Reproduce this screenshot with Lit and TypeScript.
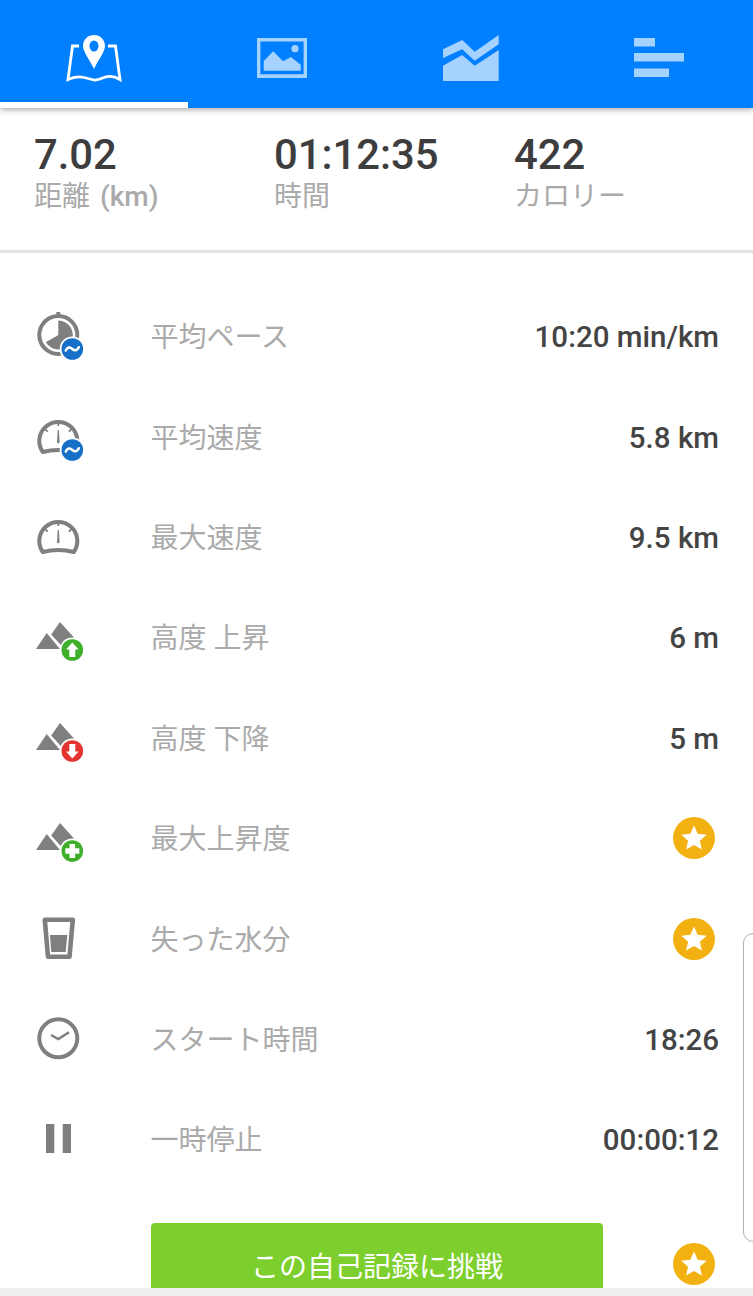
import { LitElement, html, css, svg } from "lit";
import { customElement } from "lit/decorators.js";

const GRAY = "#7f7f7f";

const badge = (color: string, inner: unknown) => svg`
  <circle cx="42.3" cy="42" r="12.6" fill="#fff"/>
  <circle cx="42.3" cy="42" r="10.8" fill="${color}"/>
  ${inner}`;

const wave = svg`<path d="M35.8 43.5c1.6-3.4 4-3.8 6.5-1.6s4.9 1.8 6.5-1.6" fill="none" stroke="#fff" stroke-width="2.6" stroke-linecap="round"/>`;
const arrowUp = svg`<path d="M42.3 34.6 48.6 41.6H45.3V49H39.3V41.6H36Z" fill="#fff"/>`;
const arrowDown = svg`<path d="M42.3 49.4 48.6 42.4H45.3V35H39.3V42.4H36Z" fill="#fff"/>`;
const plus = svg`<path d="M39.5 35h5.6v4.2h4.2v5.6h-4.2V49h-5.6v-4.2h-4.2v-5.6h4.2Z" fill="#fff"/>`;

const gauge = svg`
  <path d="M12.8 44A19 19 0 1 1 43.8 44Q28.3 40.2 12.8 44Z" fill="none" stroke="${GRAY}" stroke-width="4" stroke-linejoin="round"/>
  <path d="M28.3 15v3M15.500 21.500l2.200 2.200M41.100 21.500l-2.200 2.200" stroke="${GRAY}" stroke-width="1.800"/>
  <path d="M27.700 22h1.200l.7 12a1.300 1.300 0 0 1-2.600 0Z" fill="${GRAY}"/>`;

const mountains = svg`
  <path d="M6 41 16.700 25 30 41Z" fill="${GRAY}"/>
  <path d="M21.200 26.500 30 14 44 29.500 33.500 40Z" fill="${GRAY}"/>`;

const stopwatch = svg`
  <circle cx="28.3" cy="28" r="19" fill="none" stroke="${GRAY}" stroke-width="4"/>
  <rect x="26.300" y="5" width="4" height="5" fill="${GRAY}"/>
  <path d="M12 15l2.600-3 2.400 2-2.600 3Z" fill="${GRAY}"/>
  <path d="M28.300 28V13.500A14.500 14.500 0 1 1 15.800 35.300Z" fill="${GRAY}"/>`;

const glass = svg`
  <path d="M14.800 9.800H42.800L39.500 46.800H18Z" fill="none" stroke="${GRAY}" stroke-width="4.600" stroke-linejoin="round"/>
  <path d="M20 25H37.300L35.700 42H21.300Z" fill="${GRAY}"/>`;

const clock = svg`
  <circle cx="28.300" cy="28.300" r="19" fill="none" stroke="${GRAY}" stroke-width="4"/>
  <path d="M21 25l7.300 4 10.700-6.700" fill="none" stroke="${GRAY}" stroke-width="2.500"/>`;

const pause = svg`<path d="M16 14h8.300v29H16ZM32.700 14H41v29h-8.300Z" fill="${GRAY}"/>`;

const BLUE = "#1670c8";
const GREEN = "#3fae2a";
const RED = "#e3342f";

const ROWS = [
  { icon: svg`${stopwatch}${badge(BLUE, wave)}`, label: "平均ペース", value: "10:20 min/km" },
  { icon: svg`${gauge}${badge(BLUE, wave)}`, label: "平均速度", value: "5.8 km" },
  { icon: gauge, label: "最大速度", value: "9.5 km" },
  { icon: svg`${mountains}${badge(GREEN, arrowUp)}`, label: "高度 上昇", value: "6 m" },
  { icon: svg`${mountains}${badge(RED, arrowDown)}`, label: "高度 下降", value: "5 m" },
  { icon: svg`${mountains}${badge(GREEN, plus)}`, label: "最大上昇度", value: null },
  { icon: glass, label: "失った水分", value: null },
  { icon: clock, label: "スタート時間", value: "18:26" },
  { icon: pause, label: "一時停止", value: "00:00:12" },
];

const STATS = [
  { value: "7.02", label: html`距離 <b>(km)</b>` },
  { value: "01:12:35", label: html`時間` },
  { value: "422", label: html`カロリー` },
];

const star = html`<svg class="star" width="42" height="42" viewBox="0 0 42 42">
  <circle cx="21" cy="21" r="21" fill="#f2b111"/>
  <path d="M21 8.500l3.700 8.300 9 .9-6.800 6 2 8.800-7.900-4.600-7.900 4.600 2-8.800-6.800-6 9-.9Z" fill="#fff"/>
</svg>`;

@customElement("app-root")
export class AppRoot extends LitElement {
  static styles = css`
    :host {
      display: block;
      position: relative;
      width: 753px;
      height: 1296px;
      overflow: hidden;
      background: #fff;
      font-family: Roboto, "Noto Sans CJK JP", sans-serif;
    }
    .tabs {
      position: relative;
      z-index: 1;
      display: flex;
      height: 108px;
      background: #007fff;
      box-shadow: 0 2px 6px rgba(0, 0, 0, 0.32);
    }
    .tab {
      flex: 1;
      display: flex;
      align-items: center;
      justify-content: center;
      padding-top: 8px;
      box-sizing: border-box;
      position: relative;
    }
    .tab.active::after {
      content: "";
      position: absolute;
      left: 0;
      right: 0;
      bottom: 0;
      height: 6px;
      background: #fff;
    }
    .dim { fill: #a6d2ff; }
    .stats {
      display: grid;
      grid-template-columns: repeat(3, 240px);
      padding: 24px 0 0 34px;
      height: 145px;
      box-sizing: border-box;
      border-bottom: 3px solid #e4e4e4;
    }
    .stat-value {
      font-size: 41.8px;
      line-height: 46px;
      font-weight: 500;
      color: #3d3d3d;
    }
    .stat-label {
      font-size: 28px;
      line-height: 36px;
      color: #aaaaaa;
      margin-top: 1px;
      word-spacing: 3px;
    }
    .stat-label b { font-weight: 500; }
    .rows { padding-top: 34px; }
    .row {
      display: flex;
      align-items: center;
      height: 100.4px;
    }
    .icon {
      width: 150.5px;
      padding-left: 30px;
      box-sizing: border-box;
      flex: none;
      display: flex;
    }
    .label {
      flex: 1;
      font-size: 28px;
      color: #aaaaaa;
      padding-bottom: 4px;
    }
    .value {
      padding-right: 34px;
      font-size: 29.5px;
      font-weight: 500;
      color: #444444;
    }
    .star {
      display: block;
      margin: 0 38px 2px 0;
      flex: none;
    }
    .cta-row {
      display: flex;
      align-items: center;
      justify-content: space-between;
      margin-top: 32px;
      padding-left: 151px;
    }
    .cta {
      width: 452px;
      height: 84px;
      border: none;
      padding: 0;
      border-radius: 4px;
      background: #7dcf2e;
      color: #fff;
      font: 400 28px Roboto, "Noto Sans CJK JP", sans-serif;
    }
    .footer {
      position: absolute;
      left: 0;
      right: 0;
      bottom: 0;
      height: 8px;
      background: #efefef;
    }
    .handle {
      position: absolute;
      left: 743px;
      top: 933px;
      width: 20px;
      height: 309px;
      box-sizing: border-box;
      border: 1.5px solid #b0b0b0;
      border-radius: 10px;
      background: #fff;
    }
  `;

  private renderTabs() {
    return html`<nav class="tabs">
      <div class="tab active">
        <svg width="56" height="47" viewBox="0 0 56 47">
          <path d="M13 11H6.500L2 44.500Q10 40.500 18 42.500T28 45T38 42.500T54 44.500L49.500 11H42" fill="none" stroke="#fff" stroke-width="2.800"/>
          <path fill-rule="evenodd" d="M28 0C34.200 0 39 4.700 39 11C39 17 32 25 28 34C24 25 17 17 17 11C17 4.700 21.800 0 28 0ZM28 5.500A4.500 5.500 0 1 0 28 16.500A4.500 5.500 0 1 0 28 5.500Z" fill="#fff"/>
        </svg>
      </div>
      <div class="tab">
        <svg width="50" height="40" viewBox="0 0 50 40">
          <path class="dim" fill-rule="evenodd" d="M0 0H50V40H0ZM3.400 3.400V36.300H46.600V3.400Z"/>
          <path class="dim" d="M6.700 32.700V23L16.300 13.300 26 23.300 34 19 43.700 26.700V32.700Z"/>
          <circle class="dim" cx="38" cy="10.700" r="3.600"/>
        </svg>
      </div>
      <div class="tab">
        <svg width="56" height="46" viewBox="0 0 56 46">
          <path class="dim" d="M0 14.300 19.200 5 31.700 16.700 55.700 0V9.300L31.700 25.700 19.200 14.300 0 23Z"/>
          <path class="dim" d="M0 30.700 19.200 20 31.700 30.700 55.700 15V46H0Z"/>
        </svg>
      </div>
      <div class="tab">
        <svg width="50" height="40" viewBox="0 0 50 40">
          <rect class="dim" x="0" y="0" width="21" height="8.500"/>
          <rect class="dim" x="0" y="15" width="50" height="8.500"/>
          <rect class="dim" x="0" y="30.500" width="35" height="8.500"/>
        </svg>
      </div>
    </nav>`;
  }

  render() {
    return html`
      ${this.renderTabs()}
      <section class="stats">
        ${STATS.map(
          (s) => html`<div>
            <div class="stat-value">${s.value}</div>
            <div class="stat-label">${s.label}</div>
          </div>`
        )}
      </section>
      <section class="rows">
        ${ROWS.map(
          (r) => html`<div class="row">
            <div class="icon"><svg width="60" height="60" viewBox="0 0 60 60">${r.icon}</svg></div>
            <div class="label">${r.label}</div>
            ${r.value ? html`<div class="value">${r.value}</div>` : star}
          </div>`
        )}
        <div class="cta-row">
          <button class="cta">この自己記録に挑戦</button>
          ${star}
        </div>
      </section>
      <div class="footer"></div>
      <div class="handle"></div>
    `;
  }
}
